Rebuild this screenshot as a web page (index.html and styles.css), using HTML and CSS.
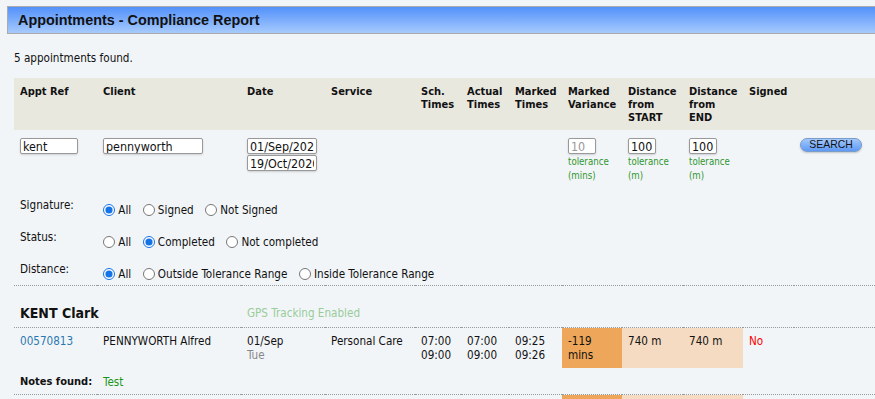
FILE: index.html
```html
<!DOCTYPE html>
<html lang="en">
<head>
    <meta charset="UTF-8">
    <title>Appointments - Compliance Report</title>
    <link rel="stylesheet" href="styles.css">
</head>
<body>
    <div class="page-title">Appointments - Compliance Report</div>
    <p class="found">5 appointments found.</p>

    <table class="report">
        <colgroup>
            <col style="width:83px"><col style="width:144px"><col style="width:84px"><col style="width:90px">
            <col style="width:46px"><col style="width:48px"><col style="width:53px"><col style="width:60px">
            <col style="width:61px"><col style="width:60px"><col style="width:51px"><col>
        </colgroup>
        <thead>
            <tr>
                <th>Appt Ref</th>
                <th>Client</th>
                <th>Date</th>
                <th>Service</th>
                <th>Sch. Times</th>
                <th>Actual Times</th>
                <th>Marked Times</th>
                <th>Marked Variance</th>
                <th>Distance from START</th>
                <th>Distance from END</th>
                <th>Signed</th>
                <th></th>
            </tr>
        </thead>
        <tbody>
            <!-- filters -->
            <tr class="filters">
                <td><input type="text" class="in-ref" value="kent"></td>
                <td><input type="text" class="in-client" value="pennyworth"></td>
                <td>
                    <input type="text" class="in-date" value="01/Sep/2020">
                    <input type="text" class="in-date" value="19/Oct/2020">
                </td>
                <td></td><td></td><td></td><td></td>
                <td><input type="text" class="in-small" placeholder="10"><div class="tol">tolerance<br>(mins)</div></td>
                <td><input type="text" class="in-small" value="100"><div class="tol">tolerance<br>(m)</div></td>
                <td><input type="text" class="in-small" value="100"><div class="tol">tolerance<br>(m)</div></td>
                <td></td>
                <td><button class="search-btn">SEARCH</button></td>
            </tr>
            <tr class="opt-row">
                <td>Signature:</td>
                <td colspan="11" class="opts">
                    <label><input type="radio" name="sig" checked> All</label>
                    <label><input type="radio" name="sig"> Signed</label>
                    <label><input type="radio" name="sig"> Not Signed</label>
                </td>
            </tr>
            <tr class="opt-row">
                <td>Status:</td>
                <td colspan="11" class="opts">
                    <label><input type="radio" name="status"> All</label>
                    <label><input type="radio" name="status" checked> Completed</label>
                    <label><input type="radio" name="status"> Not completed</label>
                </td>
            </tr>
            <tr class="opt-row last">
                <td>Distance:</td>
                <td colspan="11" class="opts">
                    <label><input type="radio" name="dist" checked> All</label>
                    <label><input type="radio" name="dist"> Outside Tolerance Range</label>
                    <label><input type="radio" name="dist"> Inside Tolerance Range</label>
                </td>
            </tr>

            <!-- carer group -->
            <tr class="group-row">
                <td colspan="2" class="carer">KENT Clark</td>
                <td colspan="10" class="gps">GPS Tracking Enabled</td>
            </tr>
            <tr class="appt-row">
                <td><a href="#">00570813</a></td>
                <td>PENNYWORTH Alfred</td>
                <td>01/Sep<br><span class="day">Tue</span></td>
                <td>Personal Care</td>
                <td>07:00<br>09:00</td>
                <td>07:00<br>09:00</td>
                <td>09:25<br>09:26</td>
                <td class="var-bad">-119<br>mins</td>
                <td class="dist-bad">740 m</td>
                <td class="dist-bad">740 m</td>
                <td class="no">No</td>
                <td></td>
            </tr>
            <tr class="notes-row">
                <td class="notes-label">Notes found:</td>
                <td colspan="11" class="notes">Test</td>
            </tr>
            <tr class="appt-row">
                <td><a href="#">00570814</a></td>
                <td>PENNYWORTH Alfred</td>
                <td>02/Sep<br><span class="day">Wed</span></td>
                <td>Personal Care</td>
                <td>07:00<br>09:00</td>
                <td>07:00<br>09:00</td>
                <td>09:25<br>09:26</td>
                <td class="var-bad">-119<br>mins</td>
                <td class="dist-bad">740 m</td>
                <td class="dist-bad">740 m</td>
                <td class="no">No</td>
                <td></td>
            </tr>
        </tbody>
    </table>
</body>
</html>
```

FILE: styles.css
```css
html { overflow-x: hidden; }
body {
    margin: 0;
    padding: 6px 0 0 7px;
    background-color: #f2f5f8;
    font-family: "DejaVu Sans Condensed", "DejaVu Sans", sans-serif;
    font-size: 11.6px;
    color: #111;
}

.page-title {
    width: 900px;
    height: 26px;
    line-height: 26px;
    padding-left: 10px;
    border: 1px solid #aaa;
    background: linear-gradient(#5391fa, #a6cafd);
    font-family: "Liberation Sans", Arial, sans-serif;
    font-weight: bold;
    font-size: 14.4px;
    color: #111;
}

.found {
    margin: 17px 0 0 7px;
    line-height: 14px;
}

/* Report table */
.report {
    margin: 13px 0 0 7px;
    width: 861px;
    table-layout: fixed;
    border-collapse: collapse;
}

.report th,
.report td {
    padding: 6px;
    text-align: left;
    vertical-align: top;
    line-height: 13px;
}

.report thead th {
    background-color: #e9e8df;
    font-weight: bold;
    font-size: 11px;
    padding: 7px 6px 6px;
    height: 39px;
}

.filters td { padding-top: 8px; padding-bottom: 11px; }

input[type="text"] {
    box-sizing: border-box;
    height: 16px;
    padding: 0 2px;
    border: 1px solid #999;
    border-radius: 2px;
    box-shadow: 0 1px 2px rgba(0, 0, 0, 0.15);
    font-family: inherit;
    font-size: 12.4px;
    color: #111;
    background: #fff;
    display: block;
}
.in-ref { width: 58px; }
.in-client { width: 100px; }
.in-date { width: 70px; }
.in-date + .in-date { margin-top: 1px; }
.in-small { width: 28px; }
.in-small::placeholder { color: #999; }

.tol {
    color: #2f962f;
    font-size: 9.6px;
    line-height: 14px;
    margin-top: 1px;
}

.search-btn {
    width: 62px;
    height: 14px;
    margin-top: 0;
    padding: 0;
    border: 1px solid #7a9cc8;
    border-radius: 7px;
    background: linear-gradient(#a3c8fc, #5f9af6);
    box-shadow: 0 1px 2px rgba(0, 0, 0, 0.2);
    font-family: "Liberation Sans", Arial, sans-serif;
    font-size: 10.4px;
    color: #111;
    line-height: 12px;
}

.opt-row td { padding-top: 5px; padding-bottom: 6px; height: 21px; }
.opt-row td.opts { padding-top: 10px; padding-bottom: 1px; }
.opt-row.last td { padding-bottom: 4px; height: 18px; }
.opt-row.last td.opts { padding-bottom: 0; height: 17px; }
.opt-row label { margin-right: 8px; }
.opt-row input[type="radio"] {
    width: 12px;
    height: 12px;
    margin: 0;
    vertical-align: -2px;
    accent-color: #1473e6;
}

.group-row td {
    border-top: 1px dotted #999;
    border-bottom: 1px dotted #999;
    padding-top: 19px;
    padding-bottom: 6px;
    line-height: 16px;
}
.carer { font-weight: bold; font-size: 14px; }
.gps { color: #99cc99; }

.appt-row td { line-height: 14px; padding-top: 6px; padding-bottom: 6px; }
.appt-row a { color: #2a78b0; text-decoration: none; }
.day { color: #888; }
.var-bad { background-color: #eda65a; }
.dist-bad { background-color: #f5dbc1; }
.no { color: #f00; }

.notes-row td {
    line-height: 14px;
    padding-top: 7px;
    padding-bottom: 5px;
    border-bottom: 1px dotted #999;
}
.notes-label { font-weight: bold; font-size: 11px; white-space: nowrap; }
.notes { color: #1a961a; }
```
